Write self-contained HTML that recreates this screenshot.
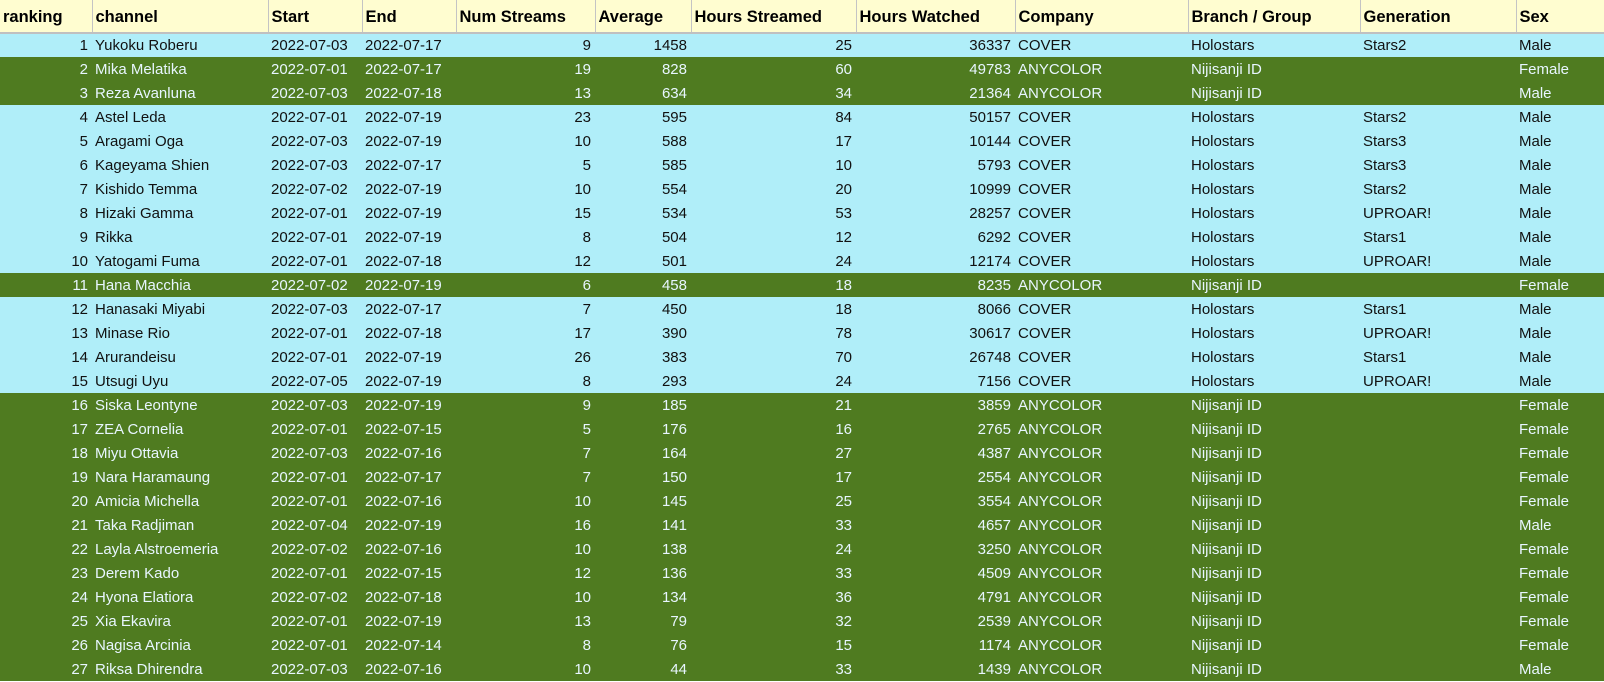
<!DOCTYPE html>
<html><head><meta charset="utf-8"><style>
*{margin:0;padding:0;box-sizing:border-box}
body{width:1604px;height:682px;overflow:hidden;background:#fff;font-family:"Liberation Sans",sans-serif}
table{border-collapse:collapse;table-layout:fixed;width:1604px}
th{height:33px;background:#fffdd0;font-size:16.5px;font-weight:bold;text-align:left;padding:2px 0 0 3px;border-right:1px solid #c4c4c4;border-bottom:2px solid #c0c0c0;color:#000;white-space:nowrap;overflow:hidden}
td{height:24px;font-size:15px;padding:0 3px;white-space:nowrap;overflow:visible}
td.r{text-align:right;padding-right:4px}
tr.c td{background:#b0eef9;color:#111}
tr.a td{background:#4f7b20;color:#e8f6ff}
</style></head><body>
<table>
<colgroup><col style="width:92px"><col style="width:176px"><col style="width:94px"><col style="width:94px"><col style="width:139px"><col style="width:96px"><col style="width:165px"><col style="width:159px"><col style="width:173px"><col style="width:172px"><col style="width:156px"><col style="width:88px"></colgroup>
<tr><th>ranking</th><th>channel</th><th>Start</th><th>End</th><th>Num Streams</th><th>Average</th><th>Hours Streamed</th><th>Hours Watched</th><th>Company</th><th>Branch / Group</th><th>Generation</th><th>Sex</th></tr>
<tr class="c"><td class="r">1</td><td>Yukoku Roberu</td><td>2022-07-03</td><td>2022-07-17</td><td class="r">9</td><td class="r">1458</td><td class="r">25</td><td class="r">36337</td><td>COVER</td><td>Holostars</td><td>Stars2</td><td>Male</td></tr>
<tr class="a"><td class="r">2</td><td>Mika Melatika</td><td>2022-07-01</td><td>2022-07-17</td><td class="r">19</td><td class="r">828</td><td class="r">60</td><td class="r">49783</td><td>ANYCOLOR</td><td>Nijisanji ID</td><td></td><td>Female</td></tr>
<tr class="a"><td class="r">3</td><td>Reza Avanluna</td><td>2022-07-03</td><td>2022-07-18</td><td class="r">13</td><td class="r">634</td><td class="r">34</td><td class="r">21364</td><td>ANYCOLOR</td><td>Nijisanji ID</td><td></td><td>Male</td></tr>
<tr class="c"><td class="r">4</td><td>Astel Leda</td><td>2022-07-01</td><td>2022-07-19</td><td class="r">23</td><td class="r">595</td><td class="r">84</td><td class="r">50157</td><td>COVER</td><td>Holostars</td><td>Stars2</td><td>Male</td></tr>
<tr class="c"><td class="r">5</td><td>Aragami Oga</td><td>2022-07-03</td><td>2022-07-19</td><td class="r">10</td><td class="r">588</td><td class="r">17</td><td class="r">10144</td><td>COVER</td><td>Holostars</td><td>Stars3</td><td>Male</td></tr>
<tr class="c"><td class="r">6</td><td>Kageyama Shien</td><td>2022-07-03</td><td>2022-07-17</td><td class="r">5</td><td class="r">585</td><td class="r">10</td><td class="r">5793</td><td>COVER</td><td>Holostars</td><td>Stars3</td><td>Male</td></tr>
<tr class="c"><td class="r">7</td><td>Kishido Temma</td><td>2022-07-02</td><td>2022-07-19</td><td class="r">10</td><td class="r">554</td><td class="r">20</td><td class="r">10999</td><td>COVER</td><td>Holostars</td><td>Stars2</td><td>Male</td></tr>
<tr class="c"><td class="r">8</td><td>Hizaki Gamma</td><td>2022-07-01</td><td>2022-07-19</td><td class="r">15</td><td class="r">534</td><td class="r">53</td><td class="r">28257</td><td>COVER</td><td>Holostars</td><td>UPROAR!</td><td>Male</td></tr>
<tr class="c"><td class="r">9</td><td>Rikka</td><td>2022-07-01</td><td>2022-07-19</td><td class="r">8</td><td class="r">504</td><td class="r">12</td><td class="r">6292</td><td>COVER</td><td>Holostars</td><td>Stars1</td><td>Male</td></tr>
<tr class="c"><td class="r">10</td><td>Yatogami Fuma</td><td>2022-07-01</td><td>2022-07-18</td><td class="r">12</td><td class="r">501</td><td class="r">24</td><td class="r">12174</td><td>COVER</td><td>Holostars</td><td>UPROAR!</td><td>Male</td></tr>
<tr class="a"><td class="r">11</td><td>Hana Macchia</td><td>2022-07-02</td><td>2022-07-19</td><td class="r">6</td><td class="r">458</td><td class="r">18</td><td class="r">8235</td><td>ANYCOLOR</td><td>Nijisanji ID</td><td></td><td>Female</td></tr>
<tr class="c"><td class="r">12</td><td>Hanasaki Miyabi</td><td>2022-07-03</td><td>2022-07-17</td><td class="r">7</td><td class="r">450</td><td class="r">18</td><td class="r">8066</td><td>COVER</td><td>Holostars</td><td>Stars1</td><td>Male</td></tr>
<tr class="c"><td class="r">13</td><td>Minase Rio</td><td>2022-07-01</td><td>2022-07-18</td><td class="r">17</td><td class="r">390</td><td class="r">78</td><td class="r">30617</td><td>COVER</td><td>Holostars</td><td>UPROAR!</td><td>Male</td></tr>
<tr class="c"><td class="r">14</td><td>Arurandeisu</td><td>2022-07-01</td><td>2022-07-19</td><td class="r">26</td><td class="r">383</td><td class="r">70</td><td class="r">26748</td><td>COVER</td><td>Holostars</td><td>Stars1</td><td>Male</td></tr>
<tr class="c"><td class="r">15</td><td>Utsugi Uyu</td><td>2022-07-05</td><td>2022-07-19</td><td class="r">8</td><td class="r">293</td><td class="r">24</td><td class="r">7156</td><td>COVER</td><td>Holostars</td><td>UPROAR!</td><td>Male</td></tr>
<tr class="a"><td class="r">16</td><td>Siska Leontyne</td><td>2022-07-03</td><td>2022-07-19</td><td class="r">9</td><td class="r">185</td><td class="r">21</td><td class="r">3859</td><td>ANYCOLOR</td><td>Nijisanji ID</td><td></td><td>Female</td></tr>
<tr class="a"><td class="r">17</td><td>ZEA Cornelia</td><td>2022-07-01</td><td>2022-07-15</td><td class="r">5</td><td class="r">176</td><td class="r">16</td><td class="r">2765</td><td>ANYCOLOR</td><td>Nijisanji ID</td><td></td><td>Female</td></tr>
<tr class="a"><td class="r">18</td><td>Miyu Ottavia</td><td>2022-07-03</td><td>2022-07-16</td><td class="r">7</td><td class="r">164</td><td class="r">27</td><td class="r">4387</td><td>ANYCOLOR</td><td>Nijisanji ID</td><td></td><td>Female</td></tr>
<tr class="a"><td class="r">19</td><td>Nara Haramaung</td><td>2022-07-01</td><td>2022-07-17</td><td class="r">7</td><td class="r">150</td><td class="r">17</td><td class="r">2554</td><td>ANYCOLOR</td><td>Nijisanji ID</td><td></td><td>Female</td></tr>
<tr class="a"><td class="r">20</td><td>Amicia Michella</td><td>2022-07-01</td><td>2022-07-16</td><td class="r">10</td><td class="r">145</td><td class="r">25</td><td class="r">3554</td><td>ANYCOLOR</td><td>Nijisanji ID</td><td></td><td>Female</td></tr>
<tr class="a"><td class="r">21</td><td>Taka Radjiman</td><td>2022-07-04</td><td>2022-07-19</td><td class="r">16</td><td class="r">141</td><td class="r">33</td><td class="r">4657</td><td>ANYCOLOR</td><td>Nijisanji ID</td><td></td><td>Male</td></tr>
<tr class="a"><td class="r">22</td><td>Layla Alstroemeria</td><td>2022-07-02</td><td>2022-07-16</td><td class="r">10</td><td class="r">138</td><td class="r">24</td><td class="r">3250</td><td>ANYCOLOR</td><td>Nijisanji ID</td><td></td><td>Female</td></tr>
<tr class="a"><td class="r">23</td><td>Derem Kado</td><td>2022-07-01</td><td>2022-07-15</td><td class="r">12</td><td class="r">136</td><td class="r">33</td><td class="r">4509</td><td>ANYCOLOR</td><td>Nijisanji ID</td><td></td><td>Female</td></tr>
<tr class="a"><td class="r">24</td><td>Hyona Elatiora</td><td>2022-07-02</td><td>2022-07-18</td><td class="r">10</td><td class="r">134</td><td class="r">36</td><td class="r">4791</td><td>ANYCOLOR</td><td>Nijisanji ID</td><td></td><td>Female</td></tr>
<tr class="a"><td class="r">25</td><td>Xia Ekavira</td><td>2022-07-01</td><td>2022-07-19</td><td class="r">13</td><td class="r">79</td><td class="r">32</td><td class="r">2539</td><td>ANYCOLOR</td><td>Nijisanji ID</td><td></td><td>Female</td></tr>
<tr class="a"><td class="r">26</td><td>Nagisa Arcinia</td><td>2022-07-01</td><td>2022-07-14</td><td class="r">8</td><td class="r">76</td><td class="r">15</td><td class="r">1174</td><td>ANYCOLOR</td><td>Nijisanji ID</td><td></td><td>Female</td></tr>
<tr class="a"><td class="r">27</td><td>Riksa Dhirendra</td><td>2022-07-03</td><td>2022-07-16</td><td class="r">10</td><td class="r">44</td><td class="r">33</td><td class="r">1439</td><td>ANYCOLOR</td><td>Nijisanji ID</td><td></td><td>Male</td></tr>
</table>
</body></html>
